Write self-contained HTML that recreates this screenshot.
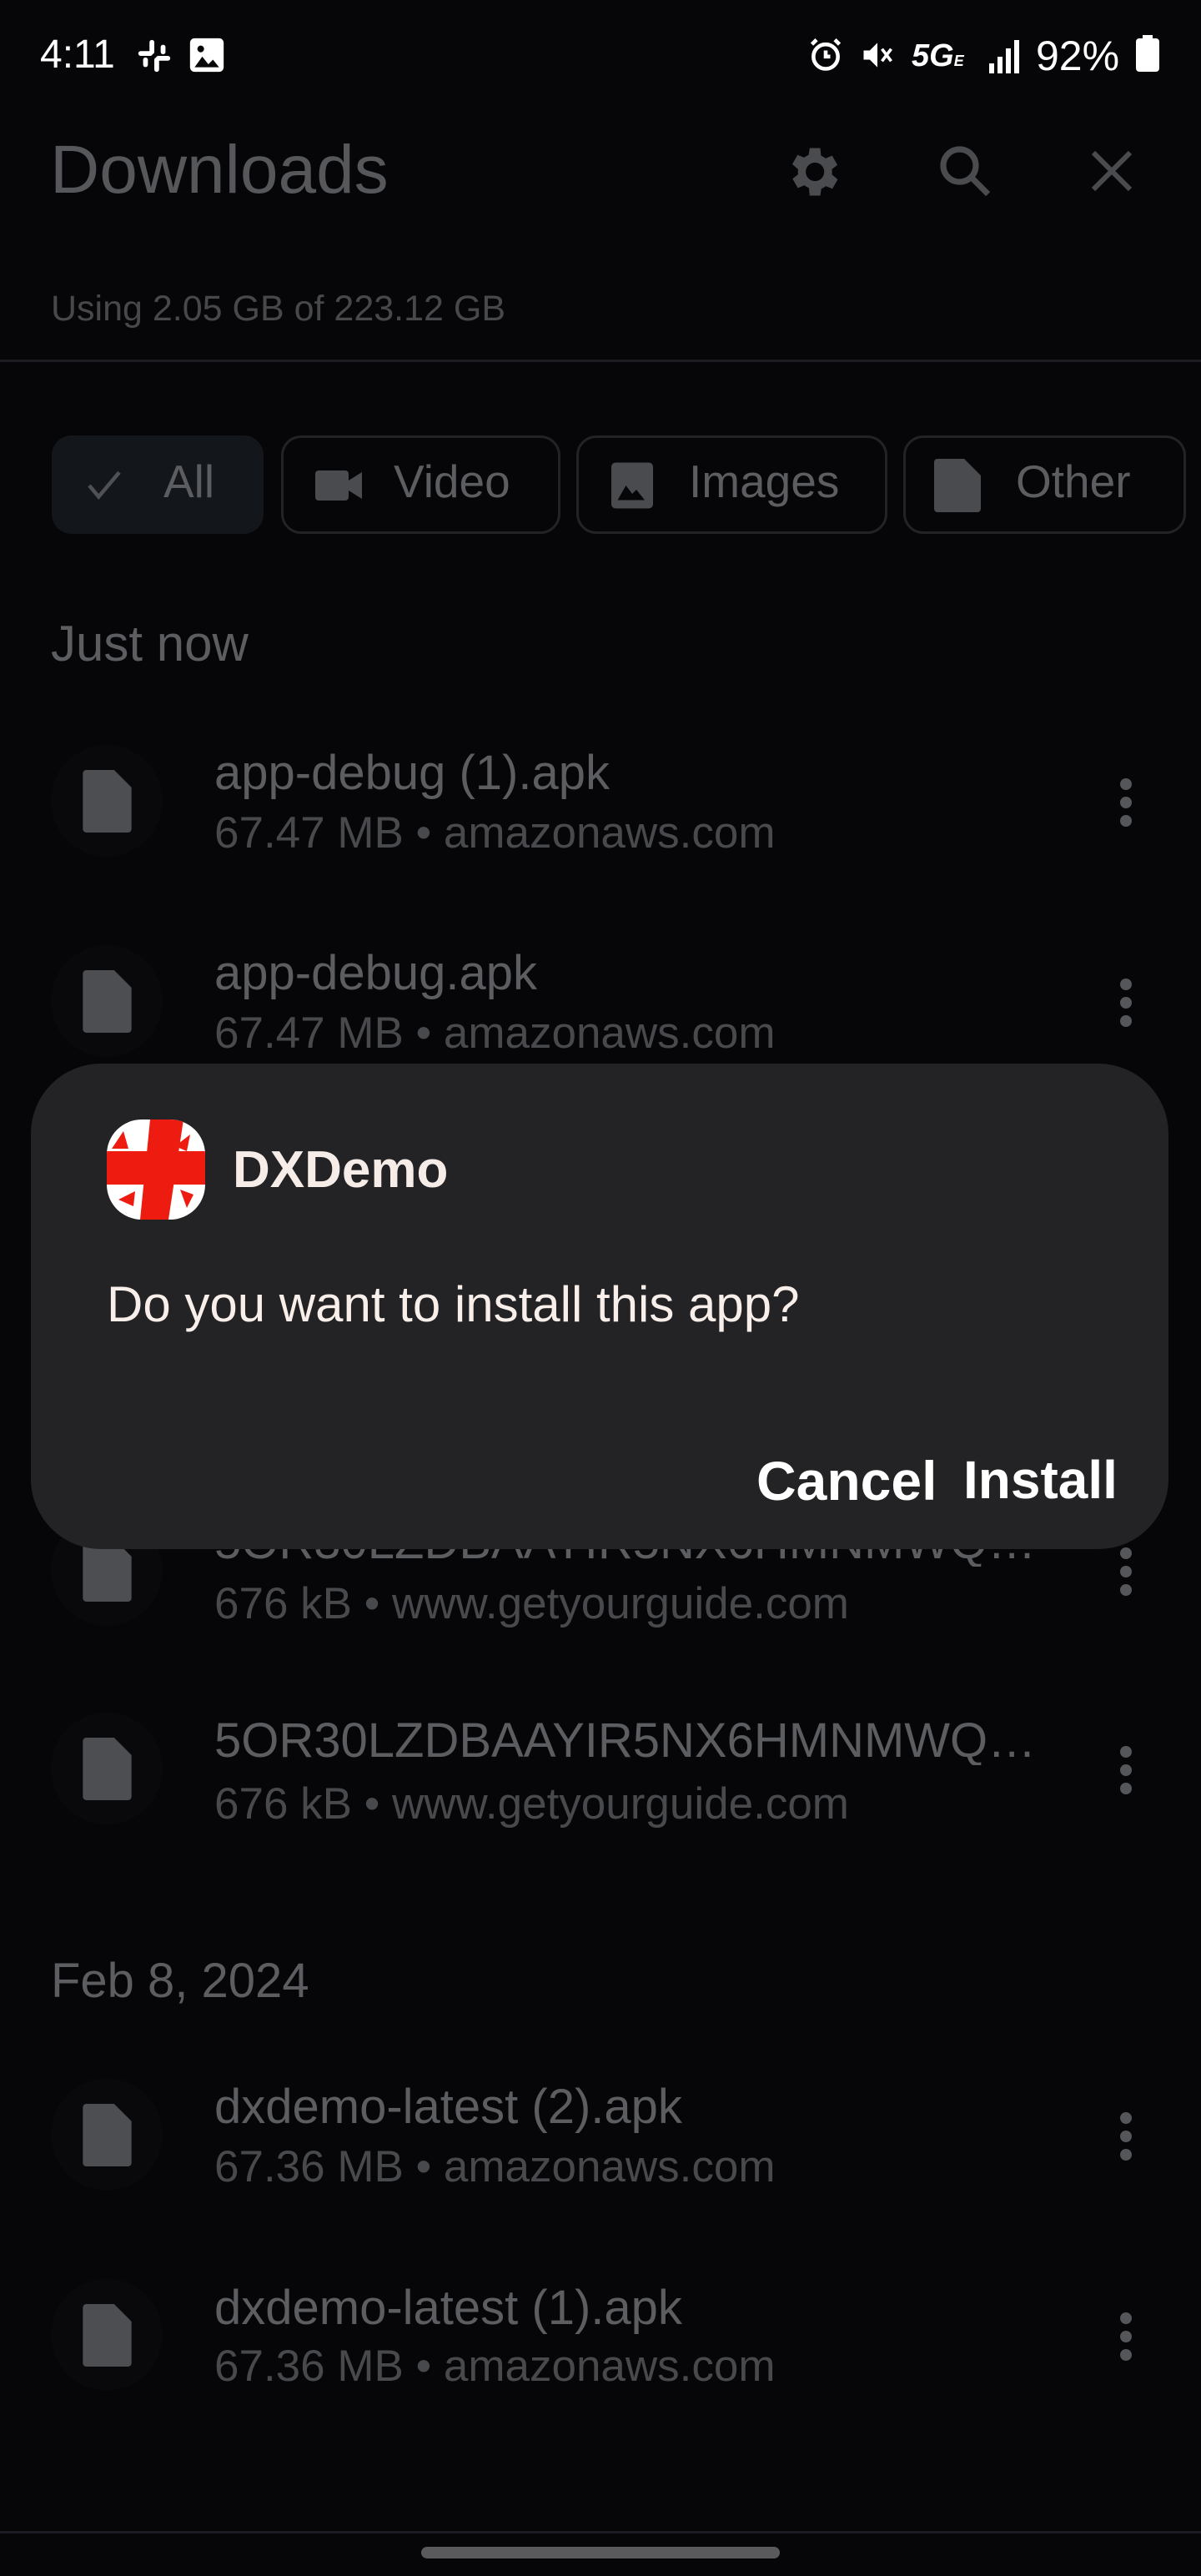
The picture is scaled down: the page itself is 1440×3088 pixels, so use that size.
<!DOCTYPE html>
<html><head><meta charset="utf-8"><style>
*{margin:0;padding:0;box-sizing:border-box}
body{width:1440px;height:3088px;background:#060608;position:relative;overflow:hidden;font-family:"Liberation Sans",sans-serif;}
.t{position:absolute;line-height:1;white-space:nowrap}
.g{color:#5c5d60}
.circ{position:absolute;width:134px;height:134px;border-radius:50%;background:#09090b;left:61px}
.dots{position:absolute;left:1343px;width:14px}
.dots i{display:block;width:14px;height:14px;border-radius:50%;background:#555659;margin-bottom:8px}
.chip{position:absolute;top:522px;height:118px;border-radius:24px;border:3px solid #232326}
.ti{font-size:58px}
.su{font-size:53px;color:#48494c}
.el{width:998px;overflow:hidden;text-overflow:ellipsis}
</style></head><body>
<!-- status bar -->
<div class="t" style="left:48px;top:42px;font-size:48px;color:#fff">4:11</div>
<svg style="position:absolute;left:162px;top:44px" width="46" height="46" viewBox="0 0 24 24" fill="#fff"><rect x="2" y="9" width="9" height="3" rx="1.5"/><rect x="13" y="12" width="9" height="3" rx="1.5"/><rect x="9" y="2" width="3" height="9" rx="1.5"/><rect x="12" y="13" width="3" height="9" rx="1.5"/><rect x="5" y="13" width="3" height="6" rx="1.5"/><rect x="16" y="5" width="3" height="6" rx="1.5"/></svg>
<svg style="position:absolute;left:226px;top:44px" width="44" height="44" viewBox="0 0 24 24"><rect x="1" y="1" width="22" height="22" rx="3" fill="#fff"/><path d="M4 20l5-7 4 5 3-3 4 5z" fill="#060608"/><circle cx="8" cy="8" r="2.2" fill="#060608"/></svg>
<svg style="position:absolute;left:968px;top:44px" width="44" height="44" viewBox="0 0 24 24" fill="none" stroke="#fff" stroke-width="2.5"><circle cx="12" cy="13" r="8"/><path d="M12 9v4h3M3 5l3-3M21 5l-3-3"/></svg>
<svg style="position:absolute;left:1030px;top:44px" width="44" height="44" viewBox="0 0 24 24" fill="#fff"><path d="M3 9h4l5-5v16l-5-5H3z"/><path d="M15 8l6 8M21 8l-6 8" stroke="#fff" stroke-width="2"/></svg>
<div class="t" style="left:1093px;top:48px;font-size:38px;color:#fff;font-weight:bold;font-style:italic">5G<span style="font-size:18px">E</span></div>
<svg style="position:absolute;left:1186px;top:48px" width="36" height="40" viewBox="0 0 18 20" fill="#fff"><rect x="0" y="14" width="3" height="6"/><rect x="5" y="10" width="3" height="10"/><rect x="10" y="5" width="3" height="15"/><rect x="15" y="0" width="3" height="20"/></svg>
<div class="t" style="left:1242px;top:42px;font-size:50px;color:#fff">92%</div>
<div style="position:absolute;left:1362px;top:46px;width:28px;height:40px;background:#fff;border-radius:4px"></div>
<div style="position:absolute;left:1370px;top:42px;width:12px;height:6px;background:#fff"></div>

<!-- header -->
<div class="t g" style="left:60px;top:163px;font-size:82px;color:#56575a">Downloads</div>
<svg style="position:absolute;left:936px;top:168px" width="76" height="76" viewBox="0 0 24 24" fill="#4a4b4e"><path d="M19.4 13a7.5 7.5 0 000-2l2.1-1.6-2-3.5-2.5 1a7 7 0 00-1.7-1L15 3h-4l-.4 2.6a7 7 0 00-1.7 1l-2.5-1-2 3.5L6.6 11a7.5 7.5 0 000 2l-2.1 1.6 2 3.5 2.5-1a7 7 0 001.7 1L11 21h4l.4-2.6a7 7 0 001.7-1l2.5 1 2-3.5zM13 15.5a3.5 3.5 0 110-7 3.5 3.5 0 010 7z"/></svg>
<svg style="position:absolute;left:1118px;top:166px" width="78" height="78" viewBox="0 0 24 24" fill="none" stroke="#4a4b4e" stroke-width="2.2"><circle cx="10" cy="10" r="6"/><path d="M14.5 14.5l6 6"/></svg>
<svg style="position:absolute;left:1300px;top:172px" width="66" height="66" viewBox="0 0 24 24" fill="none" stroke="#4a4b4e" stroke-width="2.2"><path d="M4 4l16 16M20 4L4 20"/></svg>
<div class="t g" style="left:61px;top:349px;font-size:43px;color:#47484b">Using 2.05 GB of 223.12 GB</div>
<div style="position:absolute;left:0;top:431px;width:1440px;height:3px;background:#1c1d22"></div>

<!-- chips -->
<div class="chip" style="left:62px;width:254px;background:#13161b;border-color:#13161b"></div>
<svg style="position:absolute;left:98px;top:555px" width="54" height="54" viewBox="0 0 24 24" fill="none" stroke="#4f5155" stroke-width="2"><path d="M4 12l5 6L20 5"/></svg>
<div class="t g" style="left:196px;top:550px;font-size:55px">All</div>
<div class="chip" style="left:337px;width:335px"></div>
<svg style="position:absolute;left:374px;top:558px" width="64" height="48" viewBox="0 0 32 24" fill="#4a4b4e"><rect x="2" y="3" width="20" height="18" rx="2"/><path d="M22 9l8-5v16l-8-5z"/></svg>
<div class="t g" style="left:472px;top:550px;font-size:55px">Video</div>
<div class="chip" style="left:691px;width:373px"></div>
<svg style="position:absolute;left:728px;top:552px" width="60" height="60" viewBox="0 0 24 24"><rect x="2" y="1" width="20" height="22" rx="2" fill="#4a4b4e"/><path d="M5 19l4-7 3 4 2-2 4 5z" fill="#060608"/></svg>
<div class="t g" style="left:826px;top:550px;font-size:55px">Images</div>
<div class="chip" style="left:1083px;width:339px"></div>
<svg style="position:absolute;left:1120px;top:550px" width="56" height="64" viewBox="0 0 14 16" fill="#4a4b4e"><path d="M1 0h8l5 5v10a1 1 0 01-1 1H1a1 1 0 01-1-1V1a1 1 0 011-1z"/></svg>
<div class="t g" style="left:1218px;top:550px;font-size:55px">Other</div>

<div class="t g" style="left:61px;top:742px;font-size:60px">Just now</div>

<!-- rows -->
<div class="circ" style="top:893px"></div><svg style="position:absolute;left:99px;top:923px" width="59" height="75" viewBox="0 0 14 18" fill="#4d4e51"><path d="M1 0h8l5 5v12a1 1 0 01-1 1H1a1 1 0 01-1-1V1a1 1 0 011-1z"/></svg>
<div class="t g ti" style="left:257px;top:898px">app-debug (1).apk</div>
<div class="t g su" style="left:257px;top:972px">67.47 MB • amazonaws.com</div>
<div class="dots" style="top:933px"><i></i><i></i><i></i></div>

<div class="circ" style="top:1133px"></div><svg style="position:absolute;left:99px;top:1163px" width="59" height="75" viewBox="0 0 14 18" fill="#4d4e51"><path d="M1 0h8l5 5v12a1 1 0 01-1 1H1a1 1 0 01-1-1V1a1 1 0 011-1z"/></svg>
<div class="t g ti" style="left:257px;top:1138px">app-debug.apk</div>
<div class="t g su" style="left:257px;top:1212px">67.47 MB • amazonaws.com</div>
<div class="dots" style="top:1173px"><i></i><i></i><i></i></div>

<div class="circ" style="top:1815px"></div><svg style="position:absolute;left:99px;top:1845px" width="59" height="75" viewBox="0 0 14 18" fill="#4d4e51"><path d="M1 0h8l5 5v12a1 1 0 01-1 1H1a1 1 0 01-1-1V1a1 1 0 011-1z"/></svg>
<div class="t g ti el" style="left:257px;top:1820px">5OR30LZDBAAYIR5NX6HMNMWQOXYZABCDE</div>
<div class="t g su" style="left:257px;top:1896px">676 kB • www.getyourguide.com</div>
<div class="dots" style="top:1855px"><i></i><i></i><i></i></div>

<div class="circ" style="top:2053px"></div><svg style="position:absolute;left:99px;top:2083px" width="59" height="75" viewBox="0 0 14 18" fill="#4d4e51"><path d="M1 0h8l5 5v12a1 1 0 01-1 1H1a1 1 0 01-1-1V1a1 1 0 011-1z"/></svg>
<div class="t g ti el" style="left:257px;top:2058px">5OR30LZDBAAYIR5NX6HMNMWQOXYZABCDE</div>
<div class="t g su" style="left:257px;top:2136px">676 kB • www.getyourguide.com</div>
<div class="dots" style="top:2093px"><i></i><i></i><i></i></div>

<div class="t g" style="left:61px;top:2346px;font-size:58px">Feb 8, 2024</div>

<div class="circ" style="top:2492px"></div><svg style="position:absolute;left:99px;top:2522px" width="59" height="75" viewBox="0 0 14 18" fill="#4d4e51"><path d="M1 0h8l5 5v12a1 1 0 01-1 1H1a1 1 0 01-1-1V1a1 1 0 011-1z"/></svg>
<div class="t g ti" style="left:257px;top:2497px">dxdemo-latest (2).apk</div>
<div class="t g su" style="left:257px;top:2571px">67.36 MB • amazonaws.com</div>
<div class="dots" style="top:2532px"><i></i><i></i><i></i></div>

<div class="circ" style="top:2732px"></div><svg style="position:absolute;left:99px;top:2762px" width="59" height="75" viewBox="0 0 14 18" fill="#4d4e51"><path d="M1 0h8l5 5v12a1 1 0 01-1 1H1a1 1 0 01-1-1V1a1 1 0 011-1z"/></svg>
<div class="t g ti" style="left:257px;top:2738px">dxdemo-latest (1).apk</div>
<div class="t g su" style="left:257px;top:2810px">67.36 MB • amazonaws.com</div>
<div class="dots" style="top:2772px"><i></i><i></i><i></i></div>

<div style="position:absolute;left:0;top:3034px;width:1440px;height:3px;background:#1b1c22"></div>
<div style="position:absolute;left:505px;top:3053px;width:430px;height:14px;border-radius:7px;background:#5a5a5c"></div>

<!-- dialog -->
<div style="position:absolute;left:37px;top:1275px;width:1364px;height:582px;border-radius:84px;background:#232325"></div>
<svg style="position:absolute;left:128px;top:1342px" width="118" height="120" viewBox="0 0 118 120">
<defs><clipPath id="c"><rect x="0" y="0" width="118" height="120" rx="42"/></clipPath></defs>
<g clip-path="url(#c)">
<rect width="118" height="120" fill="#fff"/>
<path d="M52 0h40L74 120H40z" fill="#ee1c10"/>
<path d="M0 38h118v40H0z" fill="#ee1c10"/>
<path d="M6 35L20 14 26 35z" fill="#ee1c10"/>
<path d="M100 18L82 32 96 38z" fill="#ee1c10"/>
<path d="M14 96L34 86 32 104z" fill="#ee1c10"/>
<path d="M88 84L96 106 104 90z" fill="#ee1c10"/>
</g></svg>
<div class="t" style="left:279px;top:1372px;font-size:62px;color:#f6ece8;font-weight:bold">DXDemo</div>
<div class="t" style="left:128px;top:1534px;font-size:60px;color:#f8eeea">Do you want to install this app?</div>
<div class="t" style="left:907px;top:1742px;font-size:66px;color:#fff;font-weight:bold">Cancel</div>
<div class="t" style="left:1155px;top:1742px;font-size:64px;color:#fff;font-weight:bold">Install</div>
</body></html>
